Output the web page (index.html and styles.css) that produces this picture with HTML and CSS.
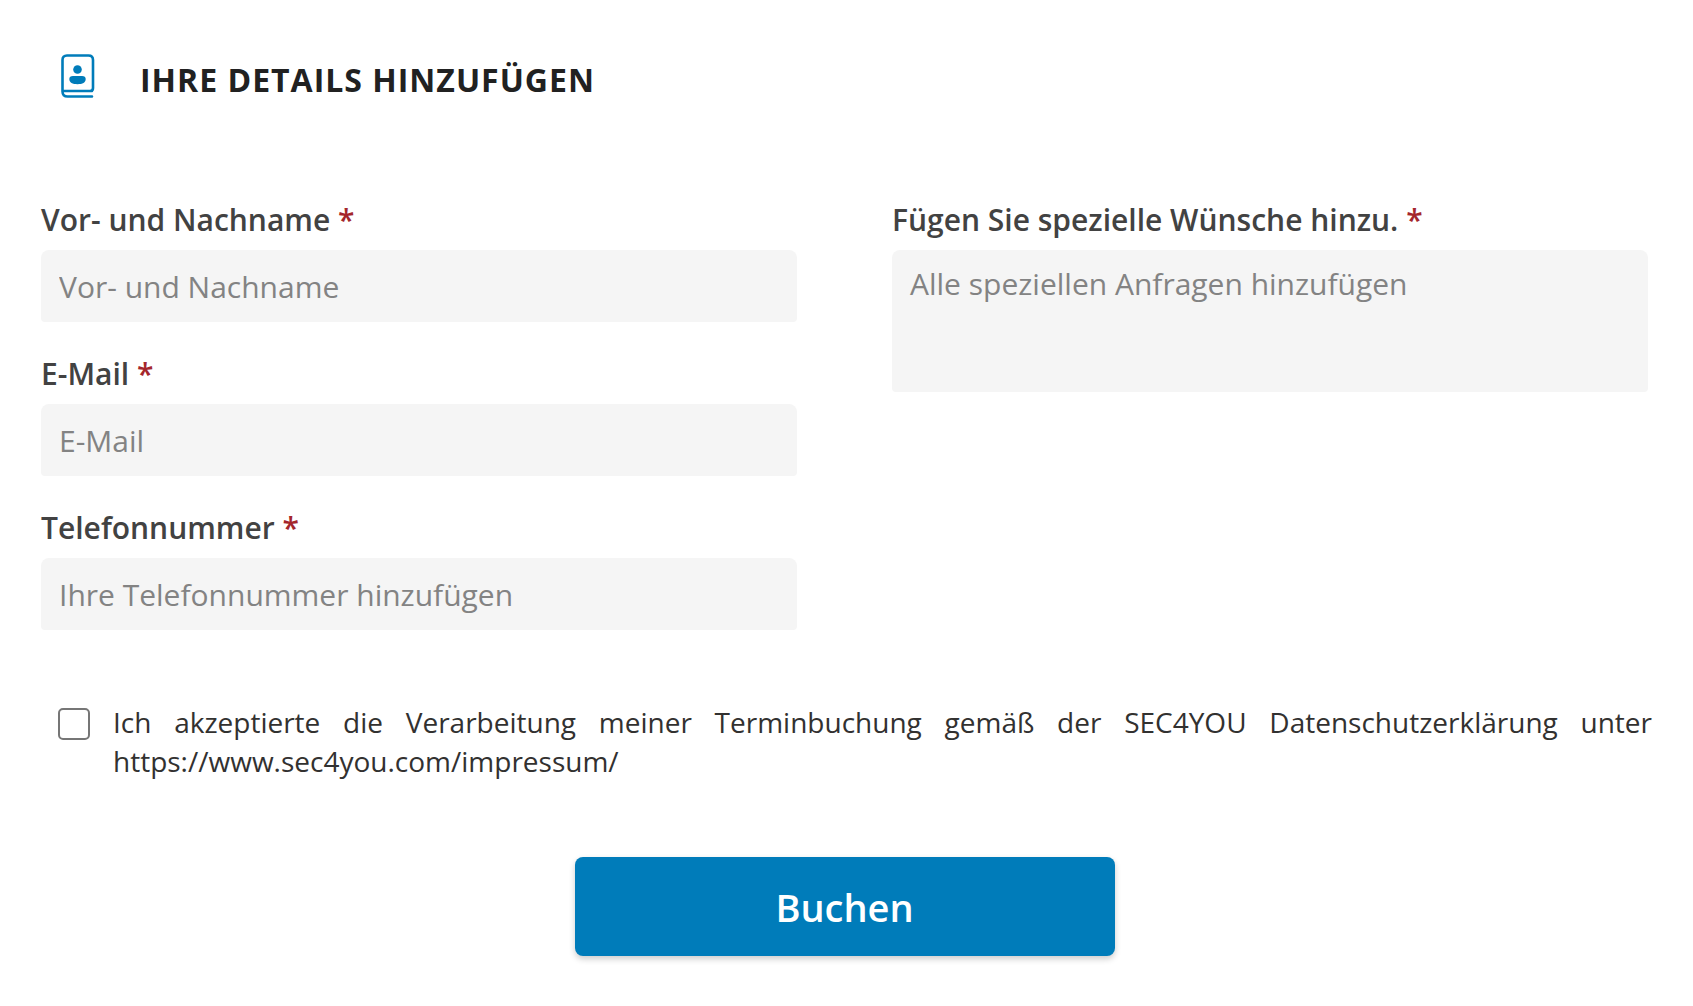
FILE: index.html
```html
<!DOCTYPE html>
<html lang="de">
<head>
  <meta charset="UTF-8" />
  <meta name="viewport" content="width=device-width, initial-scale=1" />
  <title>Ihre Details hinzufügen</title>
  <link rel="stylesheet" href="styles.css">
</head>
<body>

  <form class="booking">
    <header class="booking-header">
      <svg class="booking-icon" viewBox="0 0 34 44" aria-hidden="true">
        <path d="M31 37H2M31 42.500H6.500Q1.500 42.500 1.500 37.500V6Q1.500 1.500 6 1.500H27.500Q32 1.500 32 6V34Q32 37 29 37" fill="none" stroke="currentColor" stroke-width="2.600" stroke-linecap="round" />
        <circle cx="16.500" cy="15.500" r="4.300" fill="currentColor" />
        <path d="M12 22H21Q24.700 22 24.700 25C24.700 28.500 21.500 30.200 16.500 30.200S8.300 28.500 8.300 25Q8.300 22 12 22Z" fill="currentColor" />
      </svg>
      <h1>Ihre Details hinzufügen</h1>
    </header>

    <div class="fields">
      <div class="column">
        <div class="field">
          <label for="name">Vor- und Nachname <span class="required">*</span></label>
          <input type="text" id="name" placeholder="Vor- und Nachname" required />
        </div>
        <div class="field">
          <label for="email">E-Mail <span class="required">*</span></label>
          <input type="email" id="email" placeholder="E-Mail" required />
        </div>
        <div class="field">
          <label for="phone">Telefonnummer <span class="required">*</span></label>
          <input type="tel" id="phone" placeholder="Ihre Telefonnummer hinzufügen" required />
        </div>
      </div>

      <div class="column">
        <div class="field">
          <label for="notes">Fügen Sie spezielle Wünsche hinzu. <span class="required">*</span></label>
          <textarea id="notes" placeholder="Alle speziellen Anfragen hinzufügen" required></textarea>
        </div>
      </div>
    </div>

    <div class="consent">
      <input type="checkbox" id="consent" required />
      <label for="consent">Ich akzeptierte die Verarbeitung meiner Terminbuchung gemäß der SEC4YOU Datenschutzerklärung unter https://www.sec4you.com/impressum/</label>
    </div>

    <button type="submit" class="submit">Buchen</button>
  </form>

</body>
</html>
```
FILE: styles.css
```css
* {
  box-sizing: border-box;
}

body {
  margin: 0;
  background: #fff;
  color: #323130;
  font-family: "Segoe UI", "Open Sans", sans-serif;
}

.booking {
  display: flex;
  flex-direction: column;
  padding: 54px 45px 48px 41px;
}

.booking-header {
  display: flex;
  align-items: flex-start;
  gap: 45px;
  padding-left: 20px;
}

.booking-icon {
  width: 34px;
  height: 44px;
  color: #007cba;
}

h1 {
  margin: 4px 0 0;
  color: #212121;
  font-size: 32px;
  font-weight: 700;
  line-height: 44px;
  letter-spacing: 1px;
  text-transform: uppercase;
}

.fields {
  display: grid;
  grid-template-columns: 1fr 1fr;
  gap: 95px;
  margin-top: 98px;
}

.column {
  display: flex;
  flex-direction: column;
  gap: 32px;
}

.field {
  display: flex;
  flex-direction: column;
  gap: 10px;
}

.field label {
  color: #424242;
  font-size: 30px;
  font-weight: 600;
  line-height: 40px;
}

.required {
  color: #a4262c;
}

.field input,
.field textarea {
  width: 100%;
  height: 72px;
  padding: 1px 18px 0;
  border: 0;
  border-radius: 8px 8px 4px 4px;
  background: #f5f5f5;
  color: #323130;
  font: inherit;
  font-size: 30px;
}

.field textarea {
  display: block;
  height: 142px;
  padding-top: 14px;
  line-height: 40px;
  resize: none;
}

::placeholder {
  color: #838383;
  opacity: 1;
}

.consent {
  display: flex;
  align-items: flex-start;
  gap: 23px;
  margin: 73px -4px 0 0;
  padding-left: 17px;
}

.consent input {
  appearance: none;
  flex: none;
  width: 32px;
  height: 32px;
  margin: 5px 0 0;
  border: 2px solid #767676;
  border-radius: 5px;
}

.consent input:checked {
  background: #007cba;
}

.consent label {
  flex: 1;
  font-size: 28px;
  line-height: 39px;
  text-align: justify;
}

.submit {
  align-self: center;
  width: 540px;
  max-width: 100%;
  margin-top: 76px;
  padding: 23px 22px 21px;
  border: 0;
  border-radius: 8px;
  background: #007cba;
  box-shadow: 0 3px 6px rgba(0, 0, 0, 0.2);
  color: #fff;
  font: inherit;
  font-size: 38px;
  font-weight: 600;
  line-height: 55px;
}
```
